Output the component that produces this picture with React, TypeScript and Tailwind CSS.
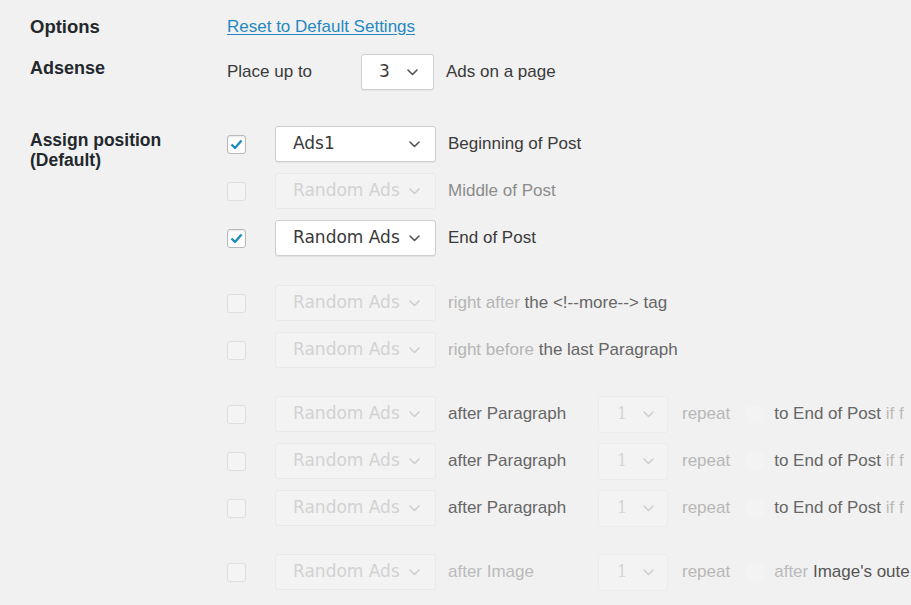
import React from 'react'

const sans = { fontFamily: '"Liberation Sans", Arial, sans-serif' }

function Chevron({ disabled }: { disabled?: boolean }) {
  return (
    <svg width="11" height="7" viewBox="0 0 11 7" className="shrink-0">
      <polyline
        points="1,1 5.5,5.5 10,1"
        fill="none"
        stroke={disabled ? '#cfcfcf' : '#555'}
        strokeWidth="1.6"
        strokeLinecap="round"
        strokeLinejoin="round"
      />
    </svg>
  )
}

function Select({ value, disabled, w }: { value: string; disabled?: boolean; w: string }) {
  return (
    <div
      className={
        'flex h-[36px] shrink-0 items-center justify-between rounded-[3px] border pl-[17px] pr-[15px] text-[17px] ' +
        w +
        (disabled
          ? ' border-[#e9e9e9] bg-[#f3f3f3] text-[#d2d2d2]'
          : ' border-[#cfcfcf] bg-white text-[#3a3a3a] shadow-[0_1px_1px_rgba(0,0,0,0.06)]')
      }
      style={{ fontFamily: '"DejaVu Sans", Verdana, sans-serif' }}
    >
      <span className="whitespace-nowrap">{value}</span>
      <Chevron disabled={disabled} />
    </div>
  )
}

function Check({ checked, disabled }: { checked?: boolean; disabled?: boolean }) {
  return (
    <div
      className={
        'flex h-[19px] w-[19px] shrink-0 items-center justify-center rounded-[3px] border ' +
        (disabled ? 'border-[#dedede] bg-[#f4f4f4]' : 'border-[#b4b9be] bg-white shadow-[inset_0_1px_2px_rgba(0,0,0,0.1)]')
      }
    >
      {checked && (
        <svg width="13" height="11" viewBox="0 0 13 11">
          <polyline points="1.5,5.5 5,9 11.5,1.5" fill="none" stroke="#1e8cbe" strokeWidth="2.4" strokeLinejoin="round" />
        </svg>
      )}
    </div>
  )
}

function PosRow({
  checked,
  disabled,
  value,
  children,
}: {
  checked?: boolean
  disabled?: boolean
  value: string
  children: React.ReactNode
}) {
  return (
    <div className="flex h-[36px] items-center whitespace-nowrap">
      <div className="w-[48px] shrink-0">
        <Check checked={checked} disabled={disabled} />
      </div>
      <Select value={value} disabled={disabled} w="w-[161px]" />
      <div className="ml-[12px] flex items-center text-[17px]">{children}</div>
    </div>
  )
}

function RepeatRow({ what, after }: { what: React.ReactNode; after: React.ReactNode }) {
  return (
    <div className="flex h-[36px] items-center whitespace-nowrap">
      <div className="w-[48px] shrink-0">
        <Check disabled />
      </div>
      <Select value="Random Ads" disabled w="w-[161px]" />
      <div className="ml-[12px] w-[150px] shrink-0 text-[17px]">{what}</div>
      <div className="flex h-[37px] w-[70px] shrink-0 items-center justify-between rounded-[3px] border border-[#ececec] bg-[#f3f3f3] pl-[18px] pr-[13px] text-[16px] text-[#d4d4d4]" style={{ fontFamily: '"DejaVu Serif", serif' }}>
        <span>1</span>
        <Chevron disabled />
      </div>
      <span className="ml-[14px] shrink-0 text-[17px] text-[#b8b8b8]">repeat</span>
      <div className="ml-[17px] h-[17px] w-[17px] shrink-0 rounded-[3px] bg-[#f3f3f3]" />
      <span className="ml-[10px] text-[17px]">{after}</span>
    </div>
  )
}

export default function App() {
  return (
    <div className="h-[605px] w-[911px] overflow-hidden bg-[#f1f1f1] pl-[30px] pt-[16px] text-[#333]" style={sans}>
      <div className="flex h-[22px] items-center">
        <div className="w-[197px] shrink-0 text-[18.5px] font-bold text-[#23282d]">Options</div>
        <a href="#" className="text-[17px] text-[#2688c2] underline underline-offset-2">
          Reset to Default Settings
        </a>
      </div>

      <div className="mt-[16px] flex">
        <div className="w-[197px] shrink-0 pt-[3px] text-[18px] font-bold leading-[22px] text-[#23282d]">Adsense</div>
        <div className="flex h-[36px] items-center text-[17px] text-[#3a3a3a]">
          <span className="w-[134px]">Place up to</span>
          <Select value="3" w="w-[73px]" />
          <span className="ml-[12px]">Ads on a page</span>
        </div>
      </div>

      <div className="mt-[36px] flex">
        <div className="w-[197px] shrink-0 pt-[4px] text-[17.5px] font-bold leading-[20px] text-[#23282d]">
          Assign position
          <br />
          (Default)
        </div>
        <div className="flex min-w-0 flex-col">
          <div className="flex flex-col gap-[11px]">
            <PosRow checked value="Ads1">
              <span className="text-[#3a3a3a]">Beginning of Post</span>
            </PosRow>
            <PosRow disabled value="Random Ads">
              <span className="text-[#8c8c8c]">Middle of Post</span>
            </PosRow>
            <PosRow checked value="Random Ads">
              <span className="text-[#3a3a3a]">End of Post</span>
            </PosRow>
          </div>

          <div className="mt-[29px] flex flex-col gap-[11px]">
            <PosRow disabled value="Random Ads">
              <span className="text-[#b5b5b5]">right after&nbsp;</span>
              <span className="text-[#666]">the &lt;!--more--&gt; tag</span>
            </PosRow>
            <PosRow disabled value="Random Ads">
              <span className="text-[#b5b5b5]">right before&nbsp;</span>
              <span className="text-[#666]">the last Paragraph</span>
            </PosRow>
          </div>

          <div className="mt-[28px] flex flex-col gap-[11px]">
            {[0, 1, 2].map((i) => (
              <RepeatRow
                key={i}
                what={<span className="text-[#666]">after Paragraph</span>}
                after={
                  <>
                    <span className="text-[#666]">to End of Post </span>
                    <span className="text-[#bbb]">if f</span>
                  </>
                }
              />
            ))}
          </div>

          <div className="mt-[28px]">
            <RepeatRow
              what={<span className="text-[#bbb]">after Image</span>}
              after={
                <>
                  <span className="text-[#bbb]">after </span>
                  <span className="text-[#555]">Image's oute</span>
                </>
              }
            />
          </div>
        </div>
      </div>
    </div>
  )
}
